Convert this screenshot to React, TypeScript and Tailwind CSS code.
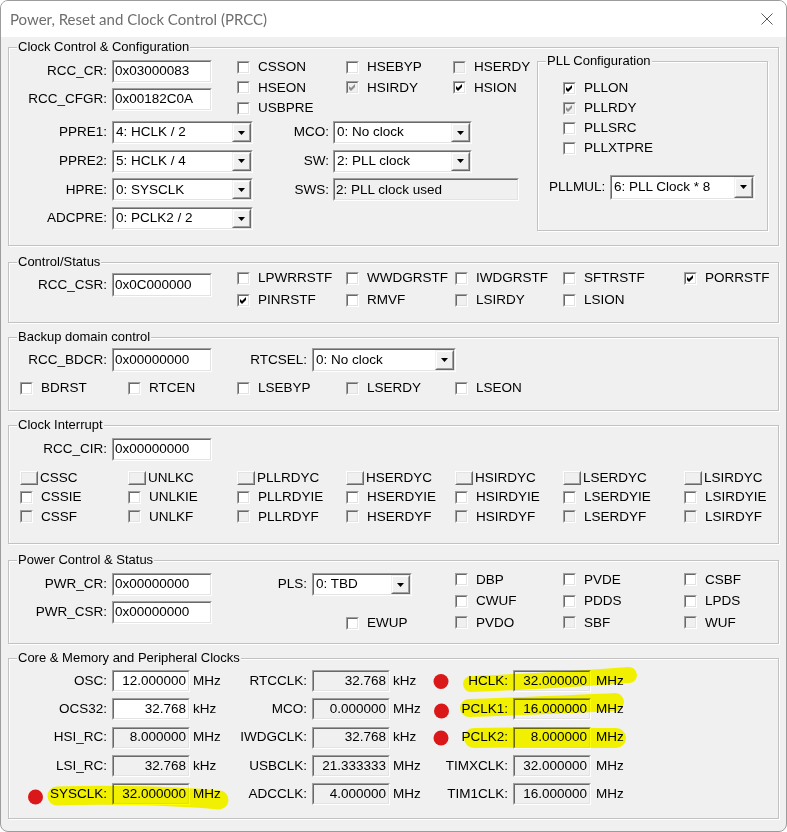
import clsx from 'clsx';
import type { ReactNode } from 'react';

// ── Win32 style primitives ─────────────────────────────────────────────────

function Sunken({ className, dim, children }: { className?: string; dim?: boolean; children?: ReactNode }) {
  return (
    <div className={clsx('border border-t-[#a0a0a0] border-l-[#a0a0a0] border-b-white border-r-white', className)}>
      <div
        className={clsx(
          'relative h-full border border-t-[#696969] border-l-[#696969] border-b-[#e3e3e3] border-r-[#e3e3e3]',
          dim ? 'bg-[#f0f0f0]' : 'bg-white',
        )}
      >
        {children}
      </div>
    </div>
  );
}

function Edit({ value, w, h = 'h-[23px]', dim, right }: { value: string; w: string; h?: string; dim?: boolean; right?: boolean }) {
  return (
    <Sunken className={clsx(w, h, 'shrink-0')} dim={dim}>
      <div className={clsx('h-full flex items-center whitespace-nowrap', right ? 'justify-end pr-[2px]' : 'pl-[1px]')}>{value}</div>
    </Sunken>
  );
}

function DropBtn() {
  return (
    <div className="h-full w-[19px] border border-t-[#f0f0f0] border-l-[#f0f0f0] border-b-[#696969] border-r-[#696969]">
      <div className="h-full border border-t-white border-l-white border-b-[#a0a0a0] border-r-[#a0a0a0] bg-[#f0f0f0] flex items-center justify-center">
        <svg width="7" height="4" viewBox="0 0 7 4">
          <path d="M0 0 H7 L3.5 4 Z" fill="#000" />
        </svg>
      </div>
    </div>
  );
}

function Combo({ value, w, h = 'h-[23px]' }: { value: string; w: string; h?: string }) {
  return (
    <Sunken className={clsx(w, h, 'shrink-0')}>
      <div className="h-full flex items-center">
        <span className="flex-1 pl-[2px] whitespace-nowrap overflow-hidden">{value}</span>
        <DropBtn />
      </div>
    </Sunken>
  );
}

function Check({ label, checked, dim }: { label?: string; checked?: boolean; dim?: boolean }) {
  return (
    <div className="flex items-center h-full whitespace-nowrap">
      <Sunken className="w-[13px] h-[13px] shrink-0" dim={dim}>
        {checked && (
          <svg className="absolute left-0 top-0" width="9" height="9" viewBox="0 0 9 9">
            <path d="M1 3 L3 5 L7 1 V4 L3 8 L1 6 Z" fill={dim ? '#8d8d8d' : '#000'} />
          </svg>
        )}
      </Sunken>
      {label && <span className="ml-[8px]">{label}</span>}
    </div>
  );
}

function PushCheck({ label }: { label: string }) {
  return (
    <div className="flex items-center h-full whitespace-nowrap">
      <div className="w-[18px] h-[14px] border border-t-white border-l-white border-b-[#696969] border-r-[#696969]">
        <div className="h-full border border-b-[#a0a0a0] border-r-[#a0a0a0] border-t-[#e3e3e3] border-l-[#e3e3e3] bg-[#f0f0f0]" />
      </div>
      <span className="ml-[2px]">{label}</span>
    </div>
  );
}

function Label({ text, w }: { text: string; w: string }) {
  return <span className={clsx(w, 'shrink-0 text-right whitespace-nowrap')}>{text}</span>;
}

function Group({ title, className, children }: { title: string; className?: string; children?: ReactNode }) {
  return (
    <div className={clsx('relative border border-[#c2c2c2] shadow-[inset_1px_1px_0_#fff,1px_1px_0_#fff]', className)}>
      <span className="absolute left-[8px] -top-[9px] px-[1px] bg-[#f0f0f0] leading-[16px] text-[13px] whitespace-nowrap">
        {title}
      </span>
      {children}
    </div>
  );
}

// ── Sections ─────────────────────────────────────────────────────────────

function ClockControl() {
  return (
    <Group title="Clock Control & Configuration" className="mt-[10px] h-[199px] w-[771px]">
      <div className="flex">
        <div className="w-[528px] flex flex-col">
          <div className="flex h-[73px]">
            <div className="w-[228px] pt-[12px] flex flex-col gap-[5px]">
              <div className="flex items-center h-[23px]">
                <Label text="RCC_CR:" w="w-[98px]" />
                <div className="ml-[5px]"><Edit value="0x03000083" w="w-[100px]" /></div>
              </div>
              <div className="flex items-center h-[23px]">
                <Label text="RCC_CFGR:" w="w-[98px]" />
                <div className="ml-[5px]"><Edit value="0x00182C0A" w="w-[100px]" /></div>
              </div>
            </div>
            <div className="w-[300px] pt-[9px] grid grid-cols-[109px_107px_84px] auto-rows-[20.5px]">
              <Check label="CSSON" />
              <Check label="HSEBYP" />
              <Check label="HSERDY" dim />
              <Check label="HSEON" />
              <Check label="HSIRDY" checked dim />
              <Check label="HSION" checked />
              <Check label="USBPRE" />
            </div>
          </div>
          <div className="flex flex-col gap-[5.7px]">
            {[
              ['PPRE1:', '4: HCLK / 2', 'MCO:', '0: No clock'],
              ['PPRE2:', '5: HCLK / 4', 'SW:', '2: PLL clock'],
              ['HPRE:', '0: SYSCLK', 'SWS:', ''],
              ['ADCPRE:', '0: PCLK2 / 2', '', ''],
            ].map(([l1, v1, l2, v2]) => (
              <div key={l1} className="flex items-center h-[23px]">
                <Label text={l1} w="w-[98px]" />
                <div className="ml-[5px]"><Combo value={v1} w="w-[141px]" /></div>
                {l2 && <Label text={l2} w="w-[76px]" />}
                {l2 && (
                  <div className="ml-[4px]">
                    {l2 === 'SWS:'
                      ? <Edit value="2: PLL clock used" w="w-[186px]" dim />
                      : <Combo value={v2} w="w-[139px]" />}
                  </div>
                )}
              </div>
            ))}
          </div>
        </div>

        {/* PLL Configuration */}
        <Group title="PLL Configuration" className="mt-[13px] w-[231px] h-[170px]">
          <div className="pt-[16px] pl-[25px]">
            <div className="h-[20px]"><Check label="PLLON" checked /></div>
            <div className="h-[20px]"><Check label="PLLRDY" checked dim /></div>
            <div className="h-[20px]"><Check label="PLLSRC" /></div>
            <div className="h-[20px]"><Check label="PLLXTPRE" /></div>
          </div>
          <div className="mt-[17px] pl-[11px] flex items-center h-[24px]">
            <span className="w-[61px] whitespace-nowrap">PLLMUL:</span>
            <Combo value="6: PLL Clock * 8" w="w-[145px]" h="h-[25px]" />
          </div>
        </Group>
      </div>
    </Group>
  );
}

function ControlStatus() {
  return (
    <Group title="Control/Status" className="mt-[16px] h-[61px] w-[771px]">
      <div className="flex">
        <div className="w-[228px] pt-[10px]">
          <div className="flex items-center h-[24px]">
            <Label text="RCC_CSR:" w="w-[98px]" />
            <div className="ml-[5px]"><Edit value="0x0C000000" w="w-[100px]" h="h-[24px]" /></div>
          </div>
        </div>
        <div className="pt-[4px] grid grid-cols-[109px_109px_108px_121px_80px] auto-rows-[22px]">
          <Check label="LPWRRSTF" />
          <Check label="WWDGRSTF" />
          <Check label="IWDGRSTF" />
          <Check label="SFTRSTF" />
          <Check label="PORRSTF" checked />
          <Check label="PINRSTF" checked />
          <Check label="RMVF" />
          <Check label="LSIRDY" dim />
          <Check label="LSION" />
        </div>
      </div>
    </Group>
  );
}

function BackupDomain() {
  return (
    <Group title="Backup domain control" className="mt-[14px] h-[74px] w-[771px]">
      <div className="mt-[10px] flex items-center h-[24px]">
        <Label text="RCC_BDCR:" w="w-[98px]" />
        <div className="ml-[5px]"><Edit value="0x00000000" w="w-[100px]" h="h-[24px]" /></div>
        <Label text="RTCSEL:" w="w-[95px]" />
        <div className="ml-[5px]"><Combo value="0: No clock" w="w-[144px]" h="h-[24px]" /></div>
      </div>
      <div className="mt-[6px] pl-[11px] h-[20px] grid grid-cols-[108px_109px_109px_109px_100px]">
        <Check label="BDRST" />
        <Check label="RTCEN" />
        <Check label="LSEBYP" />
        <Check label="LSERDY" dim />
        <Check label="LSEON" />
      </div>
    </Group>
  );
}

const IRQ = ['CSS', 'UNLK', 'PLLRDY', 'HSERDY', 'HSIRDY', 'LSERDY', 'LSIRDY'];

function ClockInterrupt() {
  return (
    <Group title="Clock Interrupt" className="mt-[14px] h-[119px] w-[771px]">
      <div className="mt-[12px] flex items-center h-[23px]">
        <Label text="RCC_CIR:" w="w-[98px]" />
        <div className="ml-[5px]"><Edit value="0x00000000" w="w-[100px]" /></div>
      </div>
      <div className="mt-[7px] pl-[11px] grid grid-cols-[108px_109px_109px_109px_108px_121px_90px] auto-rows-[19.5px]">
        {IRQ.map((n) => <PushCheck key={n + 'C'} label={n + 'C'} />)}
        {IRQ.map((n) => <Check key={n + 'IE'} label={n + 'IE'} />)}
        {IRQ.map((n) => <Check key={n + 'F'} label={n + 'F'} dim />)}
      </div>
    </Group>
  );
}

function PowerControl() {
  return (
    <Group title="Power Control & Status" className="mt-[16px] h-[84px] w-[771px]">
      <div className="flex">
        <div className="w-[203px] pt-[12px] flex flex-col gap-[5px]">
          <div className="flex items-center h-[23px]">
            <Label text="PWR_CR:" w="w-[98px]" />
            <div className="ml-[5px]"><Edit value="0x00000000" w="w-[100px]" /></div>
          </div>
          <div className="flex items-center h-[23px]">
            <Label text="PWR_CSR:" w="w-[98px]" />
            <div className="ml-[5px]"><Edit value="0x00000000" w="w-[100px]" /></div>
          </div>
        </div>
        <div className="w-[243px] pt-[12px]">
          <div className="flex items-center h-[23px]">
            <Label text="PLS:" w="w-[95px]" />
            <div className="ml-[5px]"><Combo value="0: TBD" w="w-[100px]" /></div>
          </div>
          <div className="mt-[17px] pl-[134px] h-[20px]"><Check label="EWUP" /></div>
        </div>
        <div className="pt-[8px] grid grid-cols-[108px_121px_80px] auto-rows-[21.5px]">
          <Check label="DBP" />
          <Check label="PVDE" />
          <Check label="CSBF" />
          <Check label="CWUF" />
          <Check label="PDDS" />
          <Check label="LPDS" />
          <Check label="PVDO" dim />
          <Check label="SBF" dim />
          <Check label="WUF" dim />
        </div>
      </div>
    </Group>
  );
}

type Clk = { l: string; v: string; u: string; edit?: boolean };

const CLOCKS: Clk[][] = [
  [{ l: 'OSC:', v: '12.000000', u: 'MHz', edit: true }, { l: 'RTCCLK:', v: '32.768', u: 'kHz' }, { l: 'HCLK:', v: '32.000000', u: 'MHz' }],
  [{ l: 'OCS32:', v: '32.768', u: 'kHz', edit: true }, { l: 'MCO:', v: '0.000000', u: 'MHz' }, { l: 'PCLK1:', v: '16.000000', u: 'MHz' }],
  [{ l: 'HSI_RC:', v: '8.000000', u: 'MHz' }, { l: 'IWDGCLK:', v: '32.768', u: 'kHz' }, { l: 'PCLK2:', v: '8.000000', u: 'MHz' }],
  [{ l: 'LSI_RC:', v: '32.768', u: 'kHz' }, { l: 'USBCLK:', v: '21.333333', u: 'MHz' }, { l: 'TIMXCLK:', v: '32.000000', u: 'MHz' }],
  [{ l: 'SYSCLK:', v: '32.000000', u: 'MHz' }, { l: 'ADCCLK:', v: '4.000000', u: 'MHz' }, { l: 'TIM1CLK:', v: '16.000000', u: 'MHz' }],
];

function CoreClocks() {
  const labelW = ['w-[98px]', 'w-[77px]', 'w-[78px]'];
  return (
    <Group title="Core & Memory and Peripheral Clocks" className="mt-[14px] h-[161px] w-[771px]">
      <div className="pt-[11px] flex flex-col gap-[6.25px]">
        {CLOCKS.map((row, i) => (
          <div key={i} className="flex items-center h-[22px]">
            {row.map((c, j) => (
              <div key={c.l} className="flex items-center">
                <Label text={c.l} w={labelW[j]} />
                <div className="ml-[5px]"><Edit value={c.v} w="w-[78px]" h="h-[22px]" dim={!c.edit} right /></div>
                <span className={clsx('whitespace-nowrap', j === 2 ? 'pl-[5px]' : 'w-[40px] pl-[3px]')}>{c.u}</span>
              </div>
            ))}
          </div>
        ))}
      </div>
    </Group>
  );
}

// ── Annotation overlay (highlighter strokes + red dots) ─────────────────

function Annotations() {
  return (
    <svg className="absolute inset-0 pointer-events-none mix-blend-multiply" width="787" height="832" viewBox="0 0 787 832">
      <g stroke="#ffff00" strokeLinecap="round" fill="none">
        <path d="M57 796 C 110 794, 180 796, 219 800" strokeWidth="19" />
        <path d="M471 684 C 520 682, 590 678, 629 675" strokeWidth="16" />
        <path d="M469 708 C 520 706, 580 704, 615 702" strokeWidth="18" />
        <path d="M474 738 C 520 737, 580 738, 616 738" strokeWidth="20" />
      </g>
      <g fill="#e8191b">
        <circle cx="441" cy="681.5" r="7.5" />
        <circle cx="441.5" cy="711" r="7.5" />
        <circle cx="441" cy="738" r="7.5" />
        <circle cx="35.5" cy="797" r="7.5" />
      </g>
    </svg>
  );
}

export default function App() {
  return (
    <div className="relative w-[787px] h-[832px] bg-white font-['Liberation_Sans',Arial,sans-serif] text-[13.5px] text-black">
      <div className="w-full h-full border border-[#9c9c9c] rounded-[8px] overflow-hidden bg-[#f0f0f0]">
        {/* Title bar */}
        <div className="h-[36px] bg-white flex items-center justify-between pl-[9px] pr-[13px]">
          <span className="font-['Lato','Noto_Sans',sans-serif] text-[15px] text-[#6e6e6e] whitespace-nowrap">
            Power, Reset and Clock Control (PRCC)
          </span>
          <svg width="12" height="12" viewBox="0 0 12 12">
            <path d="M0.5 0.5 L11.5 11.5 M11.5 0.5 L0.5 11.5" stroke="#5a5a5a" strokeWidth="1" />
          </svg>
        </div>

        <div className="pl-[7px]">
          <ClockControl />
          <ControlStatus />
          <BackupDomain />
          <ClockInterrupt />
          <PowerControl />
          <CoreClocks />
        </div>
      </div>
      <Annotations />
    </div>
  );
}
